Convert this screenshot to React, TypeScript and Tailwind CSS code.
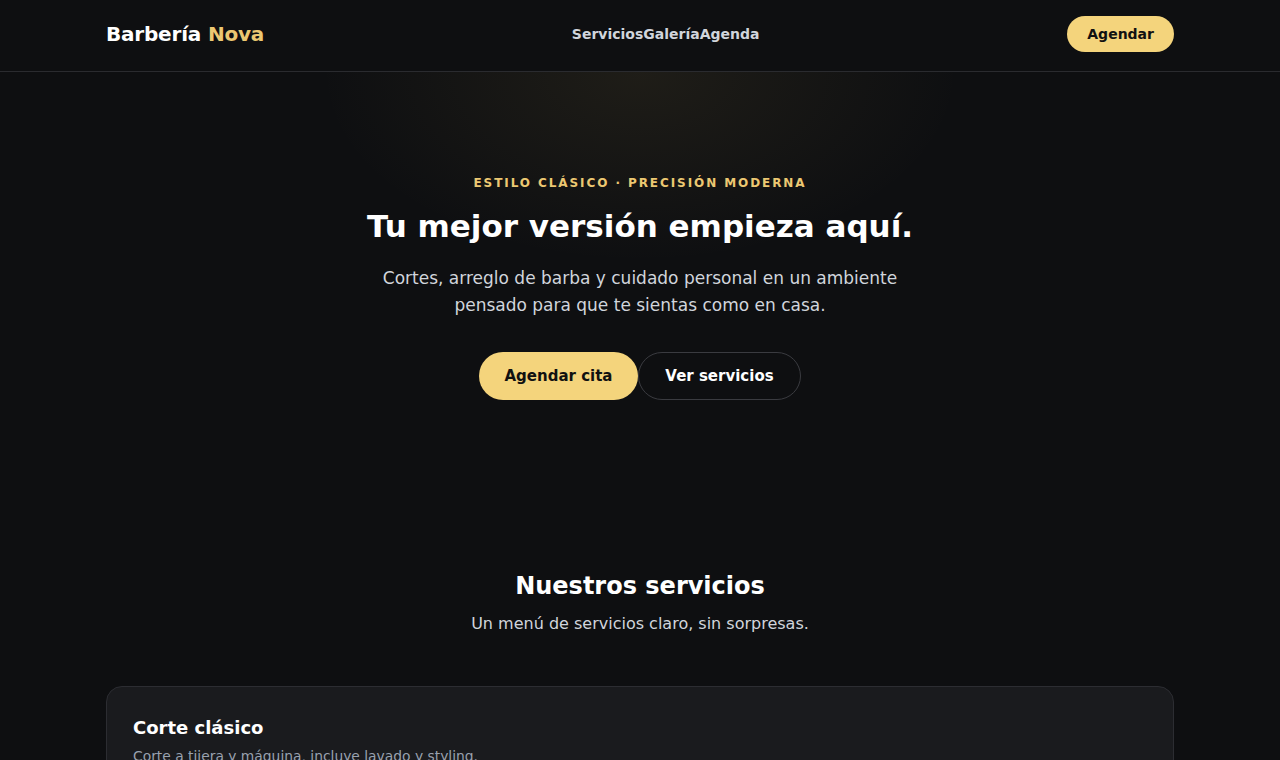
import React from 'react';

const navLinks = ['Servicios', 'Galería', 'Agenda'];

const services = [
  { name: 'Corte clásico', description: 'Corte a tijera y máquina, incluye lavado y styling.' },
];

export default function App() {
  return (
    <div className="min-h-screen bg-[#0e0f11] text-white font-['DejaVu_Sans',sans-serif]">
      <header className="border-b border-[#2a2b2f]">
        <div className="mx-auto max-w-[1068px] pt-4 pb-[19px] flex items-center justify-between">
          <a className="text-xl tracking-[-0.2px] font-bold">
            Barbería <span className="text-[#ecc872]">Nova</span>
          </a>
          <nav className="flex text-sm font-semibold text-gray-300">
            {navLinks.map(link => (
              <a key={link}>{link}</a>
            ))}
          </nav>
          <button className="h-9 px-5 rounded-full bg-[#f4d47c] text-[#111] text-sm font-bold">
            Agendar
          </button>
        </div>
      </header>

      <main>
        {/* Hero with a soft golden glow under the header */}
        <section className="bg-[radial-gradient(ellipse_320px_190px_at_50%_0%,rgba(200,170,90,0.09),transparent)] pt-[103px] pb-24 text-center">
          <p className="text-xs font-bold uppercase tracking-[0.16em] text-[#ecc872]">
            Estilo clásico · Precisión moderna
          </p>
          <h1 className="mt-4 text-[31px] leading-[39px] font-bold">Tu mejor versión empieza aquí.</h1>
          <p className="mx-auto mt-[19px] max-w-xl text-[17px] leading-[27px] text-gray-300">
            Cortes, arreglo de barba y cuidado personal en un ambiente pensado para que te sientas como en casa.
          </p>
          <div className="mt-[33px] flex justify-center">
            <button className="h-12 w-[159px] rounded-full bg-[#f4d47c] text-[#111] text-[15px] font-bold">
              Agendar cita
            </button>
            <button className="h-12 w-[163px] rounded-full border border-[#3a3b40] text-[15px] font-bold">
              Ver servicios
            </button>
          </div>
        </section>

        <section className="pt-[74px]">
          <div className="text-center">
            <h2 className="text-2xl font-bold">Nuestros servicios</h2>
            <p className="mt-2.5 text-gray-300">Un menú de servicios claro, sin sorpresas.</p>
          </div>
          <div className="mx-auto mt-[50px] max-w-[1068px] flex flex-col gap-4">
            {services.map(s => (
              <div key={s.name} className="rounded-2xl border border-[#2c2d32] bg-[#1a1b1e] px-[26px] pt-[27px] pb-6">
                <h3 className="text-lg font-bold">{s.name}</h3>
                <p className="mt-1 text-[13.85px] text-gray-400">{s.description}</p>
              </div>
            ))}
          </div>
        </section>
      </main>
    </div>
  );
}
